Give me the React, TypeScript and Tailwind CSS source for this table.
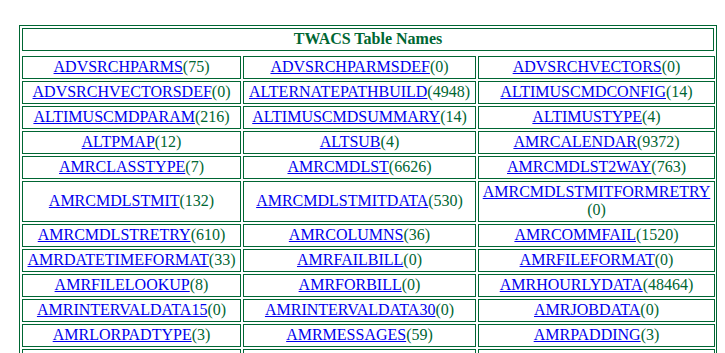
import React from 'react';

type Entry = [string, number];

const rows: Entry[][] = [
  [['ADVSRCHPARMS', 75], ['ADVSRCHPARMSDEF', 0], ['ADVSRCHVECTORS', 0]],
  [['ADVSRCHVECTORSDEF', 0], ['ALTERNATEPATHBUILD', 4948], ['ALTIMUSCMDCONFIG', 14]],
  [['ALTIMUSCMDPARAM', 216], ['ALTIMUSCMDSUMMARY', 14], ['ALTIMUSTYPE', 4]],
  [['ALTPMAP', 12], ['ALTSUB', 4], ['AMRCALENDAR', 9372]],
  [['AMRCLASSTYPE', 7], ['AMRCMDLST', 6626], ['AMRCMDLST2WAY', 763]],
  [['AMRCMDLSTMIT', 132], ['AMRCMDLSTMITDATA', 530], ['AMRCMDLSTMITFORMRETRY', 0]],
  [['AMRCMDLSTRETRY', 610], ['AMRCOLUMNS', 36], ['AMRCOMMFAIL', 1520]],
  [['AMRDATETIMEFORMAT', 33], ['AMRFAILBILL', 0], ['AMRFILEFORMAT', 0]],
  [['AMRFILELOOKUP', 8], ['AMRFORBILL', 0], ['AMRHOURLYDATA', 48464]],
  [['AMRINTERVALDATA15', 0], ['AMRINTERVALDATA30', 0], ['AMRJOBDATA', 0]],
  [['AMRLORPADTYPE', 3], ['AMRMESSAGES', 59], ['AMRPADDING', 3]],
  [['AMRPARAMS', 12], ['AMRPENDINGCMD', 0], ['AMRPROCESS', 7]],
];

const Cell: React.FC<{ name: string; count: number }> = ({ name, count }) => (
  <div className="border border-[#006633] flex items-center justify-center text-center px-px pt-px pb-[2px] leading-[18px]">
    <span>
      <a href="#" className="text-[#0000ee] underline">{name}</a>
      <wbr />
      <span className="text-[#006633]">({count})</span>
    </span>
  </div>
);

export default function App() {
  return (
    <div className="min-h-screen bg-white pt-[25px] pl-[19px] font-['Liberation_Serif',serif] text-[16px]">
      <div className="w-[698px] border border-[#006633] p-[2px]">
        <div className="border border-[#006633] h-[23px] flex items-center justify-center font-bold text-[#006633] leading-[18px] pb-px">
          TWACS Table Names
        </div>
        <div className="mt-[5px] grid grid-cols-[219px_233px_237px] gap-[2px]">
          {rows.flat().map(([name, count]) => (
            <Cell key={name} name={name} count={count} />
          ))}
        </div>
      </div>
    </div>
  );
}
